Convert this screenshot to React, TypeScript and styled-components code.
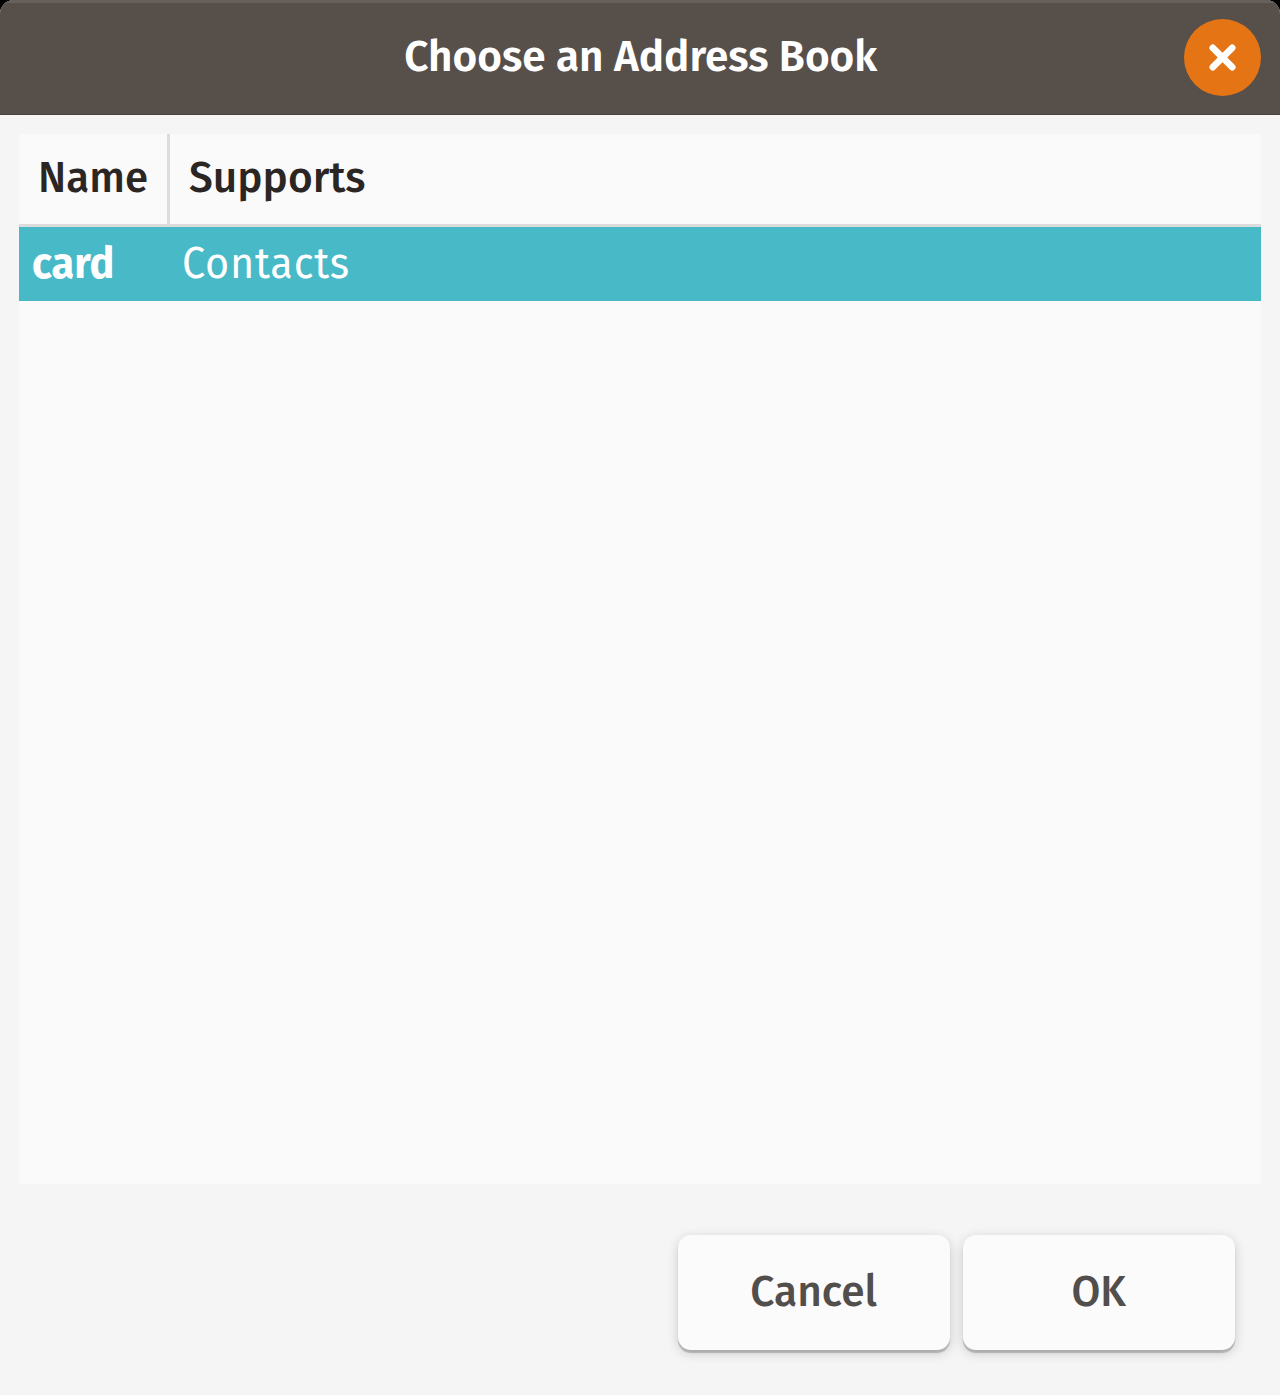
import React from "react";
import styled, { createGlobalStyle } from "styled-components";

const GlobalStyle = createGlobalStyle`
  * { box-sizing: border-box; }
  body { margin: 0; background: #000; }
`;

const Dialog = styled.main`
  display: flex;
  flex-direction: column;
  width: 1280px;
  height: 1395px;
  background: #f5f5f5;
  border-radius: 14px 14px 0 0;
  overflow: hidden;
  font-family: "Fira Sans", "Noto Sans", sans-serif;
  font-size: 44px;
  line-height: 58px;
`;

const TitleBar = styled.header`
  display: grid;
  grid-template-columns: 77px 1fr 77px;
  align-items: center;
  flex: none;
  height: 115px;
  padding: 0 19px;
  background: #574f4a;
  box-shadow: inset 0 3px 0 #68605b, inset 0 -1px 0 #4b433e;
`;

const Label = styled.span<{ $stretch?: number; $spacing?: number; $origin?: string }>`
  display: inline-block;
  white-space: nowrap;
  letter-spacing: ${(p) => p.$spacing ?? 0}px;
  transform: scaleX(${(p) => p.$stretch ?? 1});
  transform-origin: ${(p) => p.$origin ?? "left"} center;
`;

const Title = styled.h1`
  grid-column: 2;
  margin: 0;
  padding: 0 0 2px 1px;
  text-align: center;
  font: inherit;
  font-weight: 600;
  color: #fff;
`;

const CloseButton = styled.button`
  display: grid;
  place-items: center;
  width: 77px;
  height: 77px;
  padding: 0;
  border: 0;
  border-radius: 50%;
  background: #e57514;
`;

const CloseIcon = styled.svg`
  display: block;
  width: 27px;
  height: 27px;
  fill: none;
  stroke: #fff;
  stroke-width: 6.6;
  stroke-linecap: round;
`;

const Table = styled.section`
  display: flex;
  flex-direction: column;
  flex: none;
  height: 1050px;
  margin: 19px 19px 0;
  background: #fafafa;
`;

const HeaderRow = styled.div`
  display: grid;
  grid-template-columns: 151px 1fr;
  flex: none;
  height: 93px;
  border-bottom: 3px solid #dcdcdc;
  font-weight: 500;
  color: #2b2624;
`;

const HeaderCell = styled.div<{ $divided?: boolean }>`
  display: flex;
  align-items: center;
  padding: 0 0 2px 19px;
  border-right: ${(p) => (p.$divided ? "3px solid #dcdcdc" : "0")};
`;

const Row = styled.div`
  display: grid;
  grid-template-columns: 151px 1fr;
  flex: none;
  height: 74px;
  background: #48b9c7;
  color: #fff;
`;

const Cell = styled.div<{ $bold?: boolean }>`
  display: flex;
  align-items: center;
  padding-left: ${(p) => (p.$bold ? 13 : 12)}px;
  font-weight: ${(p) => (p.$bold ? 700 : 400)};
`;

const Actions = styled.footer`
  display: flex;
  justify-content: flex-end;
  gap: 13px;
  padding: 51px 45px 0 0;
`;

const ActionButton = styled.button`
  width: 272px;
  height: 115px;
  padding: 0 1px 2px 0;
  border: 0;
  border-radius: 13px;
  background: #fbfbfb;
  box-shadow: 0 3px 1px rgba(0, 0, 0, 0.2), 0 3px 12px rgba(0, 0, 0, 0.18);
  font: inherit;
  font-weight: 500;
  color: #524e4b;
`;

export default function App() {
  return (
    <>
      <GlobalStyle />
      <Dialog>
        <TitleBar>
          <Title>
            <Label $origin="center" $stretch={0.962}>Choose an Address Book</Label>
          </Title>
          <CloseButton aria-label="Close">
            <CloseIcon viewBox="0 0 27 27">
              <path d="M3.8 3.8 23.2 23.2M23.2 3.8 3.8 23.2" />
            </CloseIcon>
          </CloseButton>
        </TitleBar>
        <Table>
          <HeaderRow>
            <HeaderCell $divided>
              <Label $stretch={0.955}>Name</Label>
            </HeaderCell>
            <HeaderCell>
              <Label $stretch={0.965}>Supports</Label>
            </HeaderCell>
          </HeaderRow>
          <Row>
            <Cell $bold>
              <Label $stretch={0.942}>card</Label>
            </Cell>
            <Cell>
              <Label $stretch={0.94} $spacing={0.8}>Contacts</Label>
            </Cell>
          </Row>
        </Table>
        <Actions>
          <ActionButton>
            <Label $origin="center" $stretch={0.965}>Cancel</Label>
          </ActionButton>
          <ActionButton>
            <Label $origin="center" $stretch={0.95}>OK</Label>
          </ActionButton>
        </Actions>
      </Dialog>
    </>
  );
}
